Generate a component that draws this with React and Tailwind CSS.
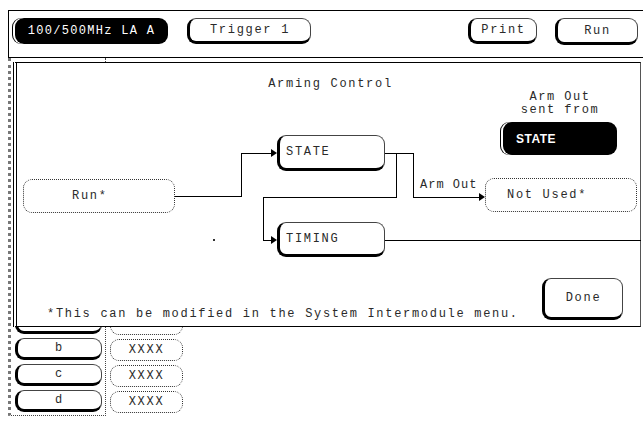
import React from "react";

const raised =
  "border border-[#444] border-l-[3px] border-b-[3px] border-l-black border-b-black rounded-[9px] bg-white";
const flat = "border border-dotted border-[#333] rounded-[9px] bg-white";

function Arrow({ x, y }) {
  return <polygon points={`${x - 6},${y - 4} ${x},${y} ${x - 6},${y + 4}`} fill="black" />;
}

export default function App() {
  return (
    <div className="relative w-[643px] h-[423px] bg-white overflow-hidden text-[#2a2a2a] font-['Liberation_Mono',monospace] text-[12px] tracking-[1.7px] leading-none">
      {/* top menu bar */}
      <div className="pt-[10px] pl-[8px]">
        <div className="h-[48px] w-[700px] border-t border-l border-b border-black flex items-start pt-[7px]">
          <div className="ml-[6px] w-[153px] h-[26px] bg-black text-white rounded-[9px] flex items-center justify-center tracking-[1.3px] shadow-[-2px_0_0_0_white,-3px_0_0_0_black]">
            100/500MHz LA A
          </div>
          <div className={`ml-[19px] w-[124px] h-[26px] flex items-center justify-center ${raised}`}>
            Trigger 1
          </div>
          <div className={`ml-[157px] w-[69px] h-[26px] flex items-center justify-center ${raised}`}>
            Print
          </div>
          <div className={`ml-[18px] w-[83px] h-[27px] flex items-center justify-center ${raised}`}>
            Run
          </div>
        </div>
      </div>

      {/* underlying screen */}
      <div className="relative h-[365px] pl-[8px] flex items-start">
        <div className="w-[98px] h-[358px] border-l-[3px] border-dotted border-l-[#777] border-r border-b border-r-[#444] border-b-[#444] flex flex-col justify-end gap-[4px] pb-[3px] pl-[4px]">
          {["", "b", "c", "d"].map((l, i) => (
            <div key={i} className={`w-[87px] h-[22px] flex items-center justify-center ${raised}`}>
              {l}
            </div>
          ))}
        </div>
        <div className="ml-[4px] h-[358px] flex flex-col justify-end gap-[4px] pb-[3px]">
          {["", "XXXX", "XXXX", "XXXX"].map((t, i) => (
            <div key={i} className={`w-[73px] h-[22px] flex items-center justify-center ${flat}`}>
              {t}
            </div>
          ))}
        </div>

        {/* Arming Control dialog (overlay) */}
        <div className="absolute left-[13px] top-[4px] w-[628px] h-[265px] bg-white border-l-[4px] border-double border-l-black border-t border-r border-b border-t-black border-b-black border-r-[#555] flex flex-col">
          <div className="text-center pt-[15px] pl-[4px]">Arming Control</div>

          <div className="relative flex-1">
            <svg className="absolute left-0 top-[-27px]" width="624" height="263" viewBox="0 0 624 263">
              <g stroke="black" strokeWidth="1" fill="none" shapeRendering="crispEdges">
                <polyline points="158,133 224,133 224,90 256,90" />
                <polyline points="368,90 396,90 396,134 464,134" />
                <polyline points="379,90 379,134 246,134 246,177 256,177" />
                <polyline points="368,177 624,177" />
              </g>
              <Arrow x={260} y={90} />
              <Arrow x={468} y={134} />
              <Arrow x={260} y={177} />
              <rect x="196" y="176" width="2" height="2" fill="#333" />
            </svg>

            <div className="absolute left-[503px] top-[1px] w-[80px] text-center leading-[13px] tracking-[1.5px]">
              Arm Out
              <br />
              sent from
            </div>
            <div className="absolute left-[486px] top-[32px] w-[114px] h-[33px] bg-black text-white rounded-[9px] flex items-center pl-[13px] font-['Liberation_Sans',sans-serif] font-bold text-[12px] tracking-[0.5px] shadow-[-2px_0_0_0_white,-3px_0_0_0_black]">
              STATE
            </div>
            <div className={`absolute left-[260px] top-[45px] w-[108px] h-[36px] flex items-center pl-[6px] ${raised}`}>
              STATE
            </div>
            <div className={`absolute left-[6px] top-[89px] w-[152px] h-[34px] flex items-center pl-[48px] ${flat}`}>
              Run*
            </div>
            <div className="absolute left-[403px] top-[89px] tracking-[1px]">Arm Out</div>
            <div className={`absolute left-[468px] top-[88px] w-[152px] h-[34px] flex items-center pl-[21px] ${flat}`}>
              Not Used*
            </div>
            <div className={`absolute left-[260px] top-[132px] w-[108px] h-[35px] flex items-center pl-[6px] ${raised}`}>
              TIMING
            </div>
          </div>

          <div className="flex items-end justify-between pl-[30px] pr-[17px] pb-[6px]">
            <div>*This can be modified in the System Intermodule menu.</div>
            <div className={`w-[81px] h-[42px] flex items-center justify-center ${raised}`}>Done</div>
          </div>
        </div>
      </div>
    </div>
  );
}
